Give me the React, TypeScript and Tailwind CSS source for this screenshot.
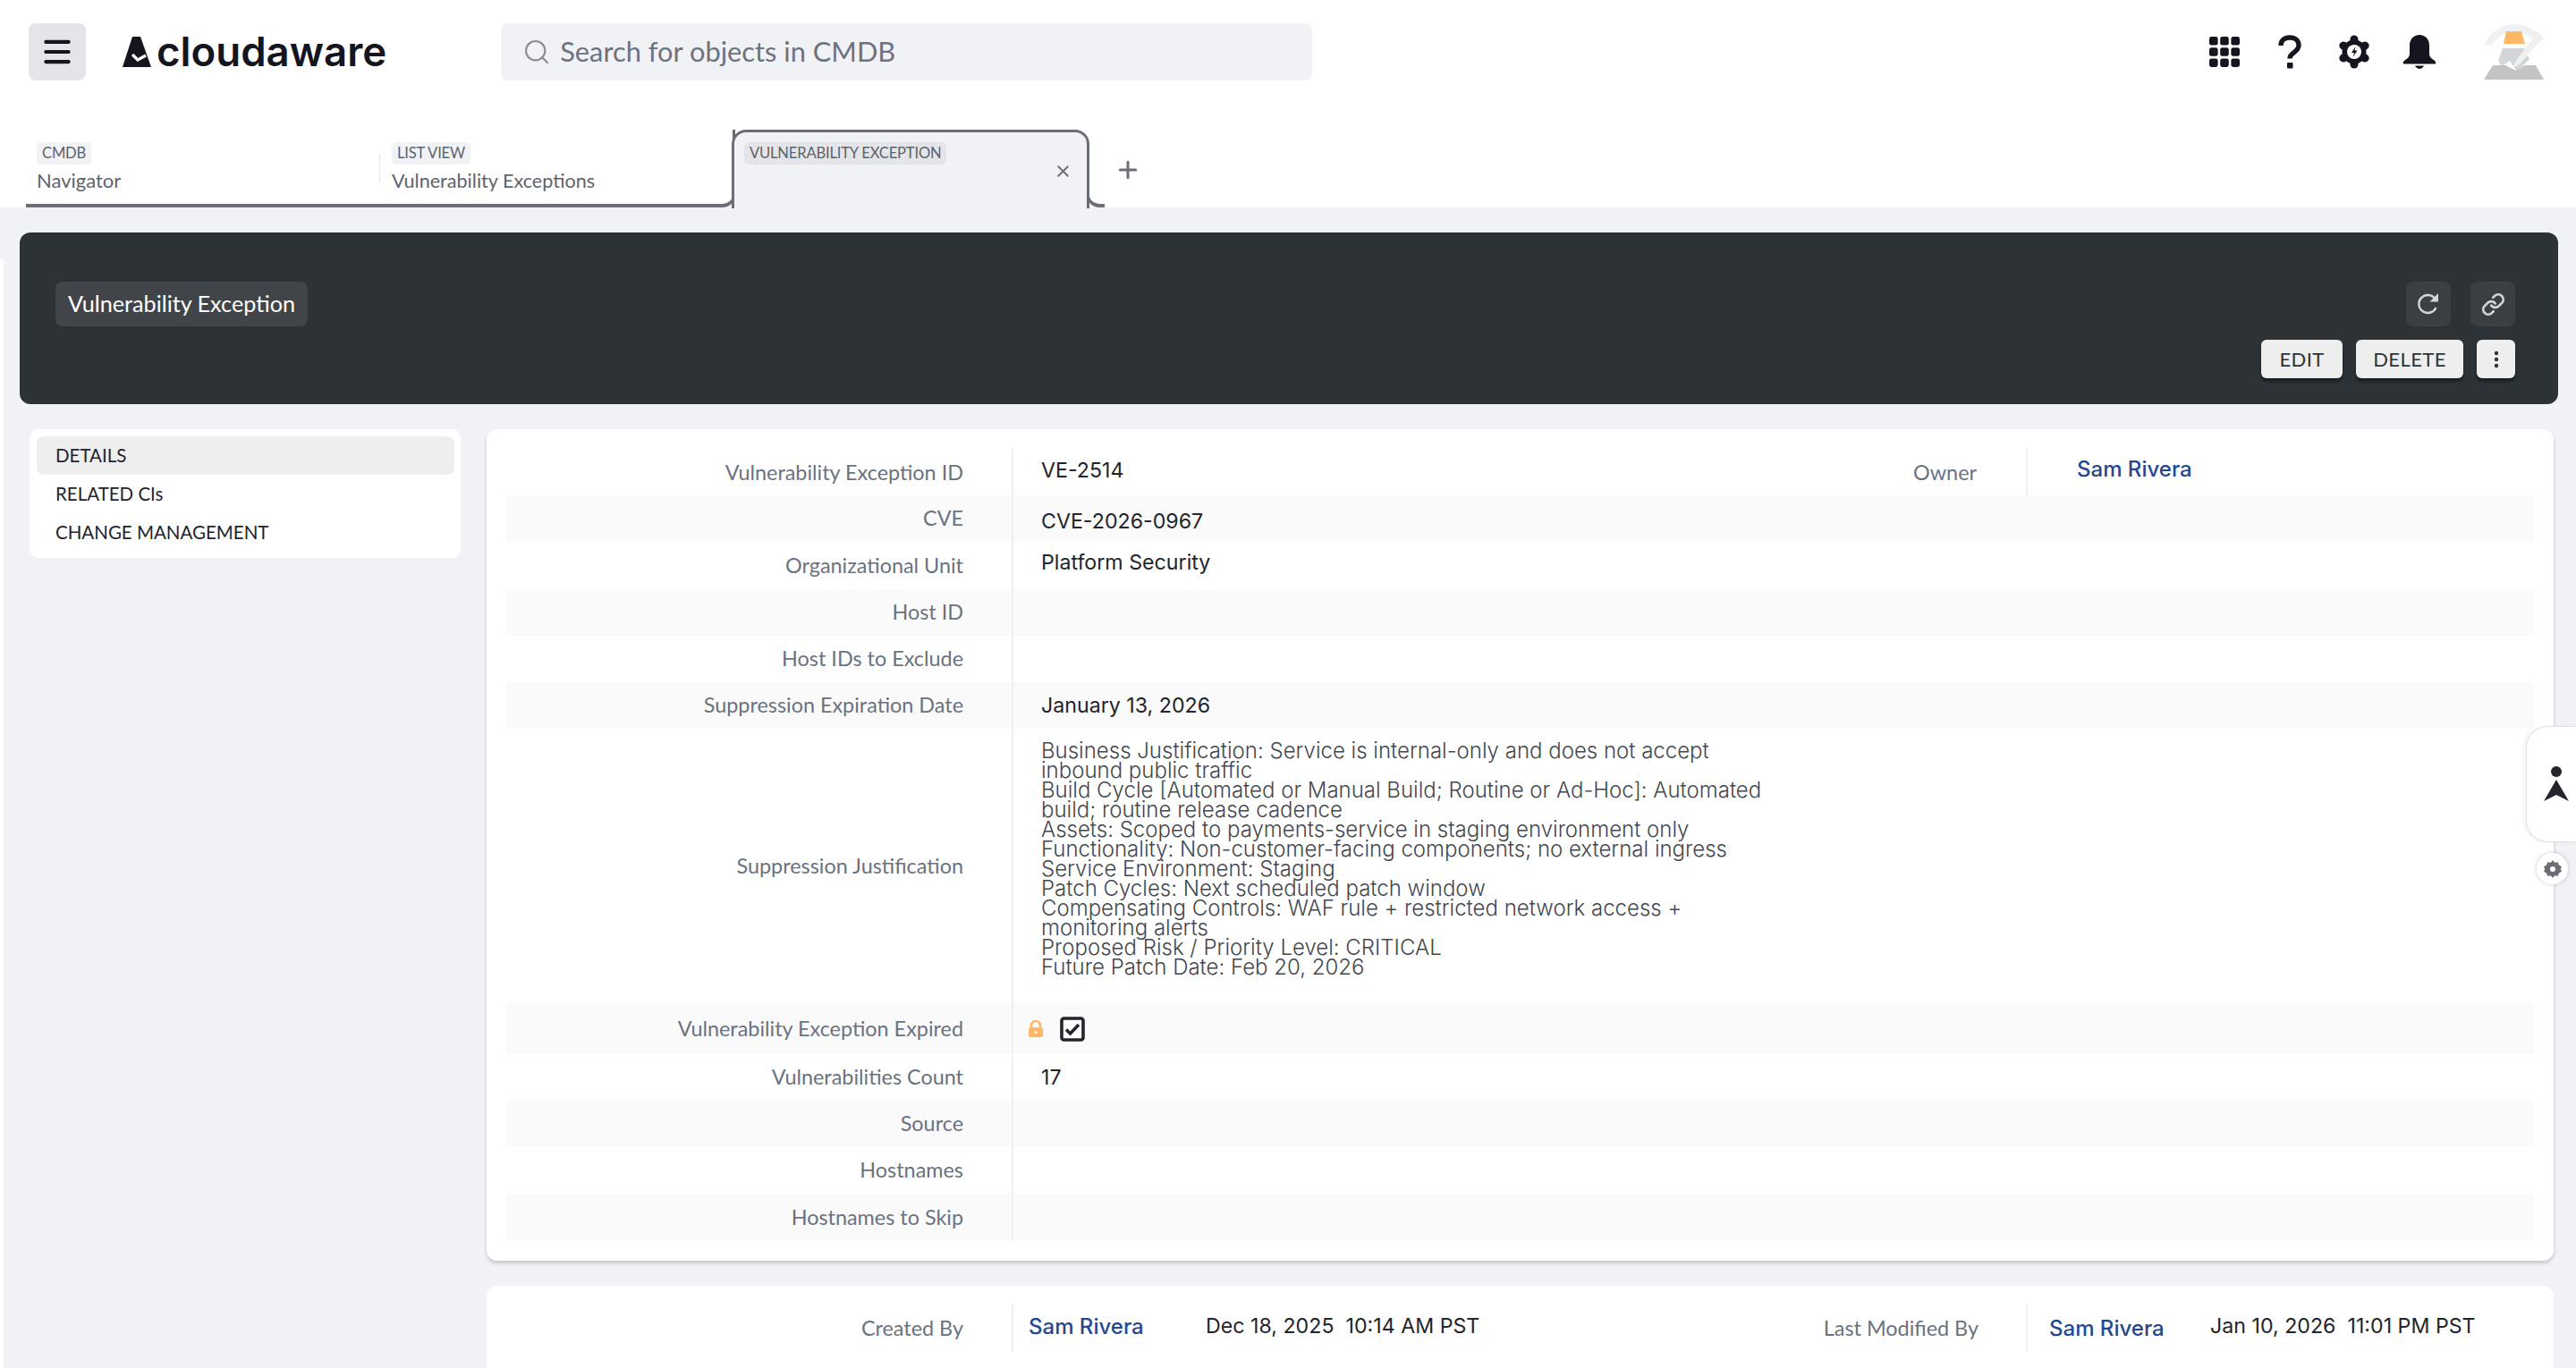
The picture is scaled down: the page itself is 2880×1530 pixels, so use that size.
import { EllipsisVertical, Link, Menu, Search, X, Plus } from "lucide-react";
import type { ReactNode } from "react";

const lines = [
  "Business Justification: Service is internal-only and does not accept",
  "inbound public traffic",
  "Build Cycle [Automated or Manual Build; Routine or Ad-Hoc]: Automated",
  "build; routine release cadence",
  "Assets: Scoped to payments-service in staging environment only",
  "Functionality: Non-customer-facing components; no external ingress",
  "Service Environment: Staging",
  "Patch Cycles: Next scheduled patch window",
  "Compensating Controls: WAF rule + restricted network access +",
  "monitoring alerts",
  "Proposed Risk / Priority Level: CRITICAL",
  "Future Patch Date: Feb 20, 2026",
];

function Logo() {
  return (
    <div className="flex items-center ml-[41px] gap-[6px]">
      <svg width="32" height="34" viewBox="0 0 32 34">
        <path d="M11 0h9l12 34H0z" fill="#15151f" />
        <path d="M11 20l6 6 9-5" fill="none" stroke="#fff" strokeWidth="3.200" />
      </svg>
      <span className="font-['Inter',sans-serif] font-semibold text-[45.600px] leading-none tracking-[0px] text-[#15151f]">
        cloudaware
      </span>
    </div>
  );
}

function GridIcon() {
  const cells = [0, 1, 2, 3, 4, 5, 6, 7, 8];
  return (
    <svg width="34" height="34" viewBox="0 0 34 34" fill="#15151f">
      {cells.map((i) => (
        <rect key={i} x={(i % 3) * 12.2} y={Math.floor(i / 3) * 12.2} width="9.6" height="9.6" rx="2.4" />
      ))}
    </svg>
  );
}

function HelpIcon() {
  return (
    <svg width="26" height="38" viewBox="0 0 26 38" fill="none">
      <path d="M3 12C3 6 7 3 13 3s10 3.500 10 8.500c0 4-2.500 6-5 8-3 2-5 3.500-5 7" stroke="#15151f" strokeWidth="5.400" />
      <rect x="10" y="31" width="6.500" height="6.500" rx="1" fill="#15151f" />
    </svg>
  );
}

function GearIcon() {
  const spokes = [0, 60, 120, 180, 240, 300];
  return (
    <svg width="36" height="38" viewBox="0 0 36 38">
      {spokes.map((a) => (
        <rect key={a} x="13.500" y="0.500" width="9" height="12" rx="4.500" fill="#15151f" transform={`rotate(${a} 18 19)`} />
      ))}
      <circle cx="18" cy="19" r="13.500" fill="#15151f" />
      <circle cx="18" cy="19" r="8" fill="#fff" />
      <path d="M19.500 13l-4.500 7h3l-1.500 5 5-7.500h-3z" fill="#15151f" />
    </svg>
  );
}

function BellIcon() {
  return (
    <svg width="38" height="38" viewBox="0 0 38 38" fill="#15151f">
      <path d="M19 0c-6.500 0-11 5-11 11.500V21c0 3-1.500 5-5.500 7.500C0.500 30 0 32.500 2 32.500h34c2 0 1.500-2.500-.5-4-4-2.500-5.500-4.500-5.500-7.500v-9.500C30 5 25.500 0 19 0z" />
      <path d="M14 34.500h10c-1 2.300-3 3.500-5 3.500s-4-1.200-5-3.500z" />
    </svg>
  );
}

function Avatar() {
  return (
    <svg width="68" height="64" viewBox="0 0 68 64">
      <path d="M0 24C8 8 20 1 34 1s24 6 33 16l-8 7C52 14 44 10 34 10S16 14 9 24z" fill="#f0f1f4" />
      <path d="M25 9h17l4 14H22z" fill="#ffb866" />
      <path d="M21 28h24l6 12-14 14-8-12-9 6-4-6z" fill="#d4d5d7" />
      <path d="M10 47h14l12 6 10-6h12l9 16H0z" fill="#c2c4c6" />
      <path d="M32 50l8-4 26-30-5-6-24 30z" fill="#f0f0f0" />
    </svg>
  );
}

function Chip({ text, active }: { text: string; active?: boolean }) {
  return (
    <div className={`self-start h-[25px] px-[6px] flex items-center rounded-[5px] text-[16.600px] tracking-[-0.2px] text-[#5e636c] ${active ? "bg-[#e4e5e9]" : "bg-[#f1f2f6]"}`}>
      {text}
    </div>
  );
}

function TabBar() {
  return (
    <div className="h-[116px] bg-white flex pl-[29px] pt-[29px] items-stretch">
      <div className="w-[395px] border-b-[4px] border-[#6b7078] pl-[12px] pt-[14px] flex flex-col">
        <Chip text="CMDB" />
        <div className="text-[22px] leading-[36px] text-[#5e636c]">Navigator</div>
      </div>
      <div className="relative w-[398px] border-b-[4px] border-r-[3px] border-[#6b7078] rounded-br-[14px] pl-[14px] pt-[14px] flex flex-col">
        <div className="absolute left-0 top-[27px] h-[32px] border-l border-[#e2e3e6]" />
        <Chip text="LIST VIEW" />
        <div className="text-[21.600px] leading-[36px] text-[#5e636c]">Vulnerability Exceptions</div>
      </div>
      <div className="relative w-[400px] -ml-[4px] bg-[#f1f2f6] border-t-[3px] border-x-[3px] border-[#6b7078] rounded-t-[16px] pl-[11px] pt-[11px] flex flex-col z-10 -mb-[1px]">
        <Chip text="VULNERABILITY EXCEPTION" active />
        <X className="absolute right-[16px] top-[33px] text-[#6b7078]" size={21} strokeWidth={2.2} />
      </div>
      <div className="w-[20px] self-end h-[16px] -ml-[3px] border-l-[3px] border-b-[4px] border-[#6b7078] rounded-bl-[14px]" />
      <Plus className="ml-[11px] mt-[30px] text-[#6b7078]" size={30} strokeWidth={2.4} />
    </div>
  );
}

function Row({
  label,
  height,
  striped,
  valueClass = "",
  labelClass = "",
  children,
}: {
  label: string;
  height: string;
  striped?: boolean;
  valueClass?: string;
  labelClass?: string;
  children?: ReactNode;
}) {
  return (
    <div className={`flex items-stretch ${height} ${striped ? "bg-[#fafafa]" : ""}`}>
      <div className={`w-[567px] shrink-0 border-r-2 border-[#f0f0f0] pr-[54px] flex items-center justify-end text-[23.400px] text-[#6b7280] ${labelClass}`}>
        {label}
      </div>
      <div className={`flex-1 pl-[31px] flex items-center font-['Inter',sans-serif] text-[23.200px] text-[#23252d] ${valueClass}`}>{children}</div>
    </div>
  );
}

function NameLink({ className = "" }: { className?: string }) {
  return (
    <span className={`font-['Inter',sans-serif] font-medium text-[24px] text-[#24488f] ${className}`}>Sam Rivera</span>
  );
}

export default function App() {
  return (
    <div className="relative w-full h-screen overflow-hidden bg-[#f1f2f6] font-['Lato',sans-serif]">
      <div className="h-[116px] bg-white flex items-center pl-[32px]">
        <button className="w-[64px] h-[64px] rounded-[8px] bg-[#e4e5e9] flex items-center justify-center">
          <Menu size={38} strokeWidth={2.6} className="text-[#15151f]" />
        </button>
        <Logo />
        <div className="ml-[128px] w-[907px] h-[64px] rounded-[8px] bg-[#f1f2f6] flex items-center pl-[24px] gap-[10px] text-[30.800px] text-[#6b7280]">
          <Search size={32} strokeWidth={1.6} className="text-[#8a8e96]" />
          Search for objects in CMDB
        </div>
        <div className="ml-auto flex items-center pr-[35px]">
          <GridIcon />
          <div className="ml-[43px]"><HelpIcon /></div>
          <div className="ml-[41px]"><GearIcon /></div>
          <div className="ml-[36px]"><BellIcon /></div>
          <div className="ml-[53px]"><Avatar /></div>
        </div>
      </div>

      <TabBar />

      <div className="pt-[28px]">
        <div className="ml-[22px] mr-[20px] h-[192px] rounded-[12px] bg-[#2d3236] pl-[40px] pr-[48px] pt-[55px] flex justify-between">
          <div className="h-[50px] px-[14px] rounded-[8px] bg-[#414549] flex items-center text-[25.200px] text-white">Vulnerability Exception</div>
          <div className="flex flex-col items-end">
            <div className="flex gap-[22px]">
              <div className="w-[50px] h-[50px] rounded-[8px] bg-[#3b3f43] flex items-center justify-center">
                <svg width="26" height="26" viewBox="0 0 26 26" fill="none">
                  <path d="M21.500 17a10 10 0 1 1-1.500-10.500" stroke="#d4d5d6" strokeWidth="2.400" />
                  <path d="M24 1v9.500h-9.500z" fill="#d4d5d6" />
                </svg>
              </div>
              <div className="w-[50px] h-[50px] rounded-[8px] bg-[#3b3f43] flex items-center justify-center">
                <Link size={27} strokeWidth={2.4} className="text-[#d4d5d6]" />
              </div>
            </div>
            <div className="flex gap-[15px] mt-[15px]">
              <button className="w-[91px] h-[43px] rounded-[6px] bg-[#eeeeee] shadow-[0_4px_3px_rgba(0,0,0,0.35)] text-[22px] tracking-[0.4px] text-[#2e3236]">EDIT</button>
              <button className="w-[120px] h-[43px] rounded-[6px] bg-[#eeeeee] shadow-[0_4px_3px_rgba(0,0,0,0.35)] text-[22px] tracking-[0.4px] text-[#2e3236]">DELETE</button>
              <button className="w-[43px] h-[43px] rounded-[6px] bg-[#eeeeee] shadow-[0_4px_3px_rgba(0,0,0,0.35)] flex items-center justify-center">
                <EllipsisVertical size={24} strokeWidth={2.4} className="text-[#2e3236]" />
              </button>
            </div>
          </div>
        </div>

        <div className="flex items-start mt-[28px] ml-[33px]">
          <div className="w-[482px] h-[144px] rounded-[10px] bg-white p-[8px] pr-[7px] text-[20.500px] text-[#23252d]">
            <div className="h-[43px] rounded-[8px] bg-[#eeeeee] pl-[21px] flex items-center">DETAILS</div>
            <div className="h-[43px] pl-[21px] flex items-center">RELATED CIs</div>
            <div className="h-[43px] pl-[21px] flex items-center">CHANGE MANAGEMENT</div>
          </div>

          <div className="ml-[29px] w-[2311px]">
            <div className="h-[930px] rounded-[12px] bg-white shadow-[0_3px_4px_rgba(0,0,0,0.18)] pt-[22px] px-[22px]">
              <div className="flex items-stretch h-[52px]">
                <div className="w-[567px] shrink-0 border-r-2 border-[#f0f0f0] pr-[54px] pt-[1px] flex items-center justify-end text-[23.400px] text-[#6b7280]">
                  Vulnerability Exception ID
                </div>
                <div className="w-[1134px] border-r-2 border-[#f0f0f0] pl-[31px] flex items-center justify-between text-[23.400px] text-[#23252d]">
                  <span className="-mt-[3px] font-['Inter',sans-serif] text-[23.200px]">VE-2514</span>
                  <span className="pr-[55px] pt-[1px] text-[#6b7280]">Owner</span>
                </div>
                <div className="pl-[55px] flex items-center">
                  <NameLink className="-mt-[7px]" />
                </div>
              </div>
              <Row label="CVE" height="h-[52px]" striped labelClass="-mt-[1px]" valueClass="pt-[7px]">CVE-2026-0967</Row>
              <Row label="Organizational Unit" height="h-[53px]" valueClass="-mt-[6px]">Platform Security</Row>
              <Row label="Host ID" height="h-[52px]" striped />
              <Row label="Host IDs to Exclude" height="h-[52px]" />
              <Row label="Suppression Expiration Date" height="h-[52px]" striped>January 13, 2026</Row>
              <Row label="Suppression Justification" height="h-[307px]" valueClass="!items-start pt-[14px]">
                <div className="text-[24px] font-light text-[#43474f] leading-[22px]">
                  {lines.map((l) => (
                    <div key={l} className="whitespace-nowrap">{l}</div>
                  ))}
                </div>
              </Row>
              <Row label="Vulnerability Exception Expired" height="h-[57px]" striped valueClass="!pl-[16px] gap-[18px]">
                <svg width="18" height="20" viewBox="0 0 18 20">
                  <path d="M4 9V6a5 5 0 0 1 10 0v3" fill="none" stroke="#ffb866" strokeWidth="2.600" />
                  <rect x="1" y="8" width="16" height="11" rx="2" fill="#ffb866" />
                  <circle cx="9" cy="13.500" r="1.600" fill="#fff" />
                </svg>
                <svg width="28" height="28" viewBox="0 0 28 28" fill="none">
                  <rect x="2" y="2" width="24" height="24" rx="2.500" fill="#fff" stroke="#23252d" strokeWidth="3.600" />
                  <path d="M7 14.500l4.500 4.500 9.500-10" stroke="#23252d" strokeWidth="3.600" />
                </svg>
              </Row>
              <Row label="Vulnerabilities Count" height="h-[52px]">17</Row>
              <Row label="Source" height="h-[52px]" striped />
              <Row label="Hostnames" height="h-[52px]" />
              <Row label="Hostnames to Skip" height="h-[53px]" striped />
            </div>

            <div className="mt-[28px] h-[200px] rounded-[12px] bg-white pt-[21px] px-[22px]">
              <div className="flex items-stretch h-[53px] text-[23.200px] text-[#23252d]">
                <div className="w-[567px] shrink-0 border-r-2 border-[#f0f0f0] pr-[54px] flex items-center justify-end text-[23.400px] text-[#6b7280]">
                  Created By
                </div>
                <div className="w-[1134px] border-r-2 border-[#f0f0f0] pl-[17px] flex items-center">
                  <NameLink className="-mt-[4px] w-[198px]" />
                  <span className="-mt-[4px] whitespace-pre font-['Inter',sans-serif]">Dec 18, 2025  10:14 AM PST</span>
                  <span className="ml-auto pr-[53px] text-[23.400px] text-[#6b7280]">Last Modified By</span>
                </div>
                <div className="pl-[24px] flex items-center">
                  <NameLink className="w-[180px]" />
                  <span className="-mt-[4px] whitespace-pre font-['Inter',sans-serif]">Jan 10, 2026  11:01 PM PST</span>
                </div>
              </div>
            </div>
          </div>
        </div>
      </div>

      <div className="absolute left-0 top-[290px] bottom-0 w-[4px] bg-white" />

      <div className="absolute right-0 top-[812px] w-[56px] h-[130px] rounded-l-[24px] bg-white border border-r-0 border-[#e0e1e5] shadow-[-2px_0_5px_rgba(0,0,0,0.06)] flex items-center">
        <svg width="30" height="44" viewBox="0 0 30 44" className="ml-[18px]" fill="#23252d">
          <circle cx="15" cy="8" r="6" />
          <path d="M15 17l14 24-14-7-14 7z" />
        </svg>
      </div>
      <div className="absolute right-[9px] top-[954px] w-[35px] h-[35px] rounded-full bg-white shadow-[0_0_5px_rgba(0,0,0,0.2)] flex items-center justify-center">
        <svg width="20" height="20" viewBox="0 0 20 20" fill="#6b6e75">
          <path fillRule="evenodd" d="M10 0l2.200 2.800 3.500-.6 1.300 3.300 3 1.800-1.300 2.700 1.300 2.700-3 1.800-1.300 3.300-3.500-.6L10 20l-2.200-2.800-3.500.6L3 14.500 0 12.700 1.300 10 0 7.300l3-1.800 1.300-3.300 3.500.6zM10 7a3 3 0 1 0 0 6 3 3 0 0 0 0-6z" />
        </svg>
      </div>
    </div>
  );
}
